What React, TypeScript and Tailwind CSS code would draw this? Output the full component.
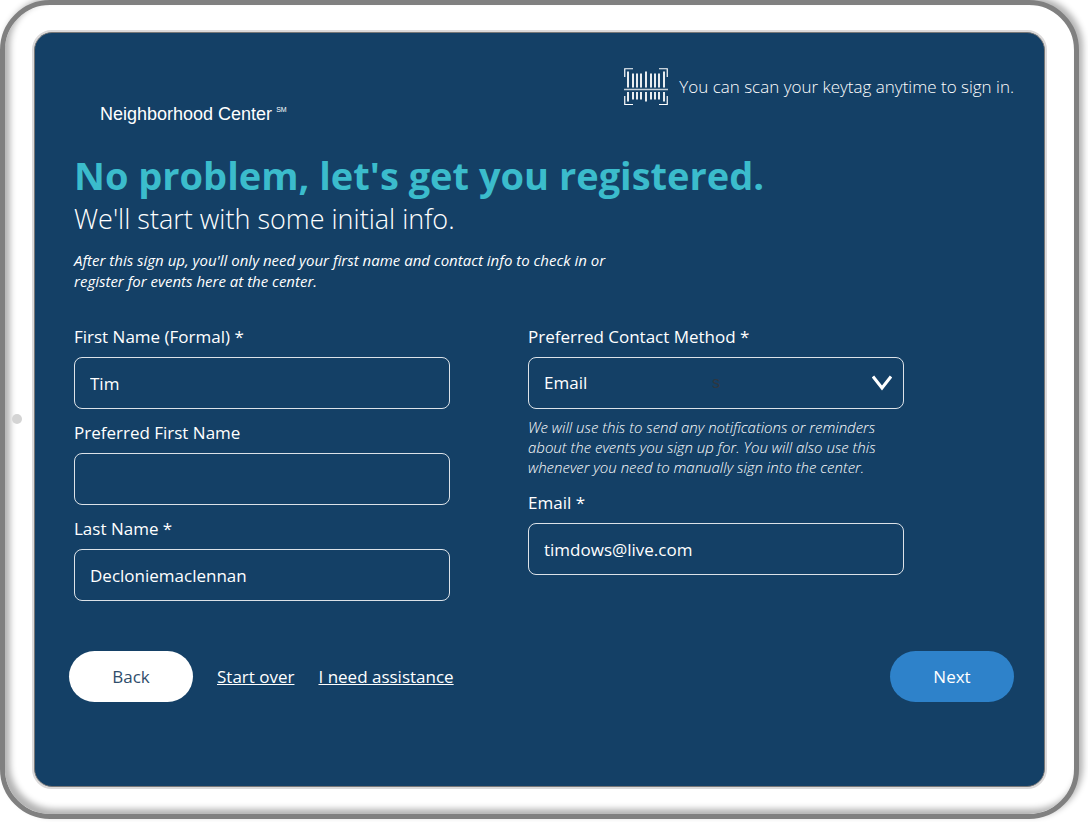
import type { ReactNode } from "react";

const fieldBox =
  "h-[52px] w-full rounded-lg border border-white/85 bg-transparent px-[15px] text-[17px] text-white outline-none focus:border-white";

function Field({
  id,
  label,
  children,
}: {
  id: string;
  label: string;
  children: ReactNode;
}) {
  return (
    <div className="flex flex-col gap-2">
      <label htmlFor={id} className="text-[17px] leading-6">
        {label}
      </label>
      {children}
    </div>
  );
}

function BarcodeIcon() {
  const bars = [4, 9, 13, 17, 22, 27, 31, 35, 40];
  const tall = [4, 22, 40];
  return (
    <svg viewBox="0 0 44 38" className="h-[38px] w-11 shrink-0" fill="none" stroke="white" aria-hidden="true">
      <path
        d="M9 .75H.75V9M35 .75h8.25V9M.75 28v8.5H9M43.25 28v8.5H35"
        strokeWidth="1.2"
      />
      <path d="M0 21.5h44" strokeWidth="1.3" strokeOpacity="0.75" />
      {bars.map((x) => {
        const isTall = tall.includes(x);
        return (
          <path
            key={x}
            d={isTall ? `M${x} 3.5V19.5M${x} 24V33.5` : `M${x} 5.5V19.5M${x} 24V31.5`}
            strokeWidth="1.8"
          />
        );
      })}
    </svg>
  );
}

export default function App() {
  return (
    <div className="flex min-h-screen bg-white pr-[9px] pb-[3px] font-['Open_Sans',sans-serif] text-white">
      <div className="relative flex grow rounded-[50px] border-5 border-[#808080] bg-white px-[27px] pt-[25px] pb-[25px] shadow-[4px_-3px_6px_rgba(0,0,0,0.3),inset_5px_-5px_6px_rgba(0,0,0,0.3)]">
        <span className="absolute top-1/2 left-[7px] mt-1 size-[10px] rounded-full bg-[#d4d4d4]" />

        <div className="flex grow rounded-[20px] border-2 border-[#dcdada]">
          <main className="flex grow flex-col rounded-[18px] border border-[#777] bg-[#144066]">
            <header className="flex items-start justify-between pt-[35px] pr-[30px] pl-[65px]">
              <p className="pt-[34px] font-['Liberation_Sans',sans-serif] text-[18px] leading-6">
                Neighborhood Center<sup className="-top-2 pl-1 text-[7px]">SM</sup>
              </p>
              <p className="flex items-center gap-[11px] text-[17px] font-light">
                <BarcodeIcon />
                You can scan your keytag anytime to sign in.
              </p>
            </header>

            <div className="px-[39px] pt-[23px]">
              <h1 className="text-[38px] leading-[52px] font-bold text-[#3bbccc]">
                No problem, let's get you registered.
              </h1>
              <p className="text-[27px] leading-9 font-light">We'll start with some initial info.</p>
              <p className="max-w-[560px] pt-[13px] text-[15px] leading-[21px] font-medium italic">
                After this sign up, you'll only need your first name and contact info to check in or
                register for events here at the center.
              </p>
            </div>

            <form className="flex grow flex-col" onSubmit={(e) => e.preventDefault()}>
              <div className="grid max-w-[908px] grid-cols-2 gap-x-[78px] px-[39px] pt-[33px]">
                <div className="flex flex-col gap-3">
                  <Field id="first" label="First Name (Formal) *">
                    <input id="first" className={fieldBox} defaultValue="Tim" />
                  </Field>
                  <Field id="preferred" label="Preferred First Name">
                    <input id="preferred" className={fieldBox} />
                  </Field>
                  <Field id="last" label="Last Name *">
                    <input id="last" className={fieldBox} defaultValue="Decloniemaclennan" />
                  </Field>
                </div>

                <div className="flex flex-col gap-3">
                  <Field id="method" label="Preferred Contact Method *">
                    <div className="relative">
                      <select id="method" className={`${fieldBox} appearance-none`}>
                        <option>Email</option>
                      </select>
                      <span className="pointer-events-none absolute inset-0 flex items-center justify-center font-['Liberation_Sans',sans-serif] text-[16px] text-[#2f3740]">
                        s
                      </span>
                      <svg
                        viewBox="0 0 20 16"
                        className="pointer-events-none absolute top-[18px] right-3 h-4 w-5"
                        fill="none"
                        stroke="white"
                        strokeWidth="3"
                        aria-hidden="true"
                      >
                        <path d="M1 1.5l9 11.5 9-11.5" />
                      </svg>
                    </div>
                    <p className="pb-0.5 text-[15px] leading-5 font-light italic">
                      We will use this to send any notifications or reminders about the events you
                      sign up for. You will also use this whenever you need to manually sign into
                      the center.
                    </p>
                  </Field>
                  <Field id="email" label="Email *">
                    <input id="email" type="email" className={fieldBox} defaultValue="timdows@live.com" />
                  </Field>
                </div>
              </div>

              <footer className="flex items-center gap-6 pt-[50px] pr-[30px] pb-[82px] pl-[34px] text-[17px]">
                <button type="button" className="h-[51px] w-[124px] rounded-full bg-white text-[#2f4d6b]">
                  Back
                </button>
                <a href="#start" className="underline">
                  Start over
                </a>
                <a href="#assistance" className="underline">
                  I need assistance
                </a>
                <button type="submit" className="ml-auto h-[51px] w-[124px] rounded-full bg-[#2e82ca]">
                  Next
                </button>
              </footer>
            </form>
          </main>
        </div>
      </div>
    </div>
  );
}
